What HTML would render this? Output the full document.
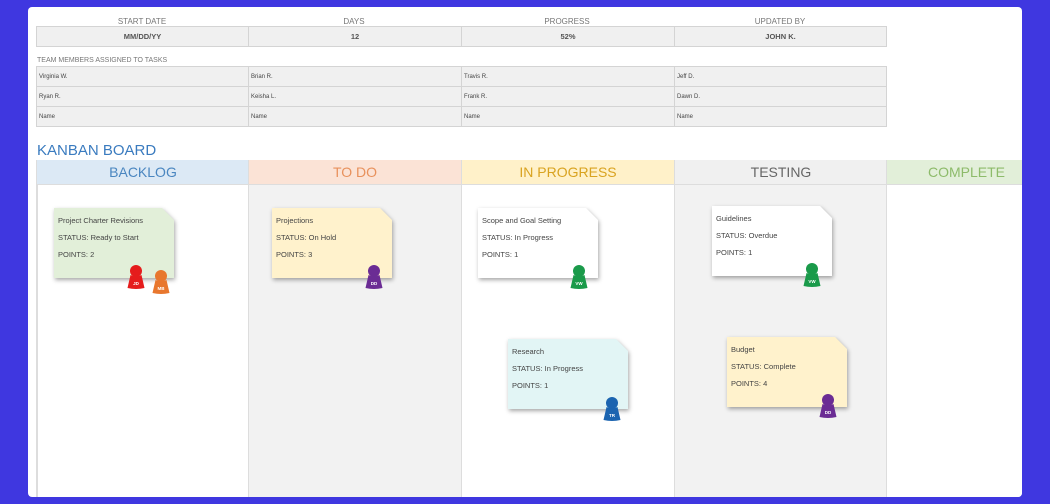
<!DOCTYPE html>
<html><head><meta charset="utf-8"><style>
*{margin:0;padding:0;box-sizing:border-box}
body{width:1050px;height:504px;background:#3f37e0;font-family:"Liberation Sans",sans-serif;position:relative;overflow:hidden}
.panel{position:absolute;left:28px;top:7px;width:994px;height:490px;background:#fff;border-radius:4px;overflow:hidden}
.a{position:absolute}
.lbl{position:absolute;font-size:8px;color:#777;text-align:center;width:212px}
.cell{position:absolute;background:#f0f0f0;border:1px solid #d4d4d4;font-size:7px;color:#444}
.hc{text-align:center;font-weight:bold;font-size:7.5px;line-height:19px;color:#555}
.tc{padding-left:2px;line-height:20px;font-size:6px;color:#444}
.col{position:absolute;top:153px;height:340px;border-left:1px solid #ddd}
.hdr{position:absolute;top:153px;height:25px;line-height:25px;text-align:center;font-size:14px;border-bottom:1px solid #ddd;border-left:1px solid #ddd}
.cw{position:absolute;filter:drop-shadow(1px 2px 2px rgba(0,0,0,.35))}
.card{width:120px;height:70px;clip-path:polygon(0 0,108px 0,120px 12px,120px 100%,0 100%);font-size:7.5px;color:#444;padding:4px 0 0 4px;line-height:17px}
</style></head><body>
<div class="panel">
<div class="lbl" style="left:8px;top:10px">START DATE</div>
<div class="lbl" style="left:220px;top:10px">DAYS</div>
<div class="lbl" style="left:433px;top:10px">PROGRESS</div>
<div class="lbl" style="left:646px;top:10px">UPDATED BY</div>
<div class="cell hc" style="left:8px;top:19px;width:213px;height:21px">MM/DD/YY</div>
<div class="cell hc" style="left:220px;top:19px;width:214px;height:21px">12</div>
<div class="cell hc" style="left:433px;top:19px;width:214px;height:21px">52%</div>
<div class="cell hc" style="left:646px;top:19px;width:213px;height:21px">JOHN K.</div>
<div class="a" style="left:9px;top:50px;font-size:7px;color:#777">TEAM MEMBERS ASSIGNED TO TASKS</div>
<div class="cell tc" style="left:8px;top:59px;width:213px;height:21px">Virginia W.</div>
<div class="cell tc" style="left:220px;top:59px;width:214px;height:21px">Brian R.</div>
<div class="cell tc" style="left:433px;top:59px;width:214px;height:21px">Travis R.</div>
<div class="cell tc" style="left:646px;top:59px;width:213px;height:21px">Jeff D.</div>
<div class="cell tc" style="left:8px;top:79px;width:213px;height:21px">Ryan R.</div>
<div class="cell tc" style="left:220px;top:79px;width:214px;height:21px">Keisha L.</div>
<div class="cell tc" style="left:433px;top:79px;width:214px;height:21px">Frank R.</div>
<div class="cell tc" style="left:646px;top:79px;width:213px;height:21px">Dawn D.</div>
<div class="cell tc" style="left:8px;top:99px;width:213px;height:21px">Name</div>
<div class="cell tc" style="left:220px;top:99px;width:214px;height:21px">Name</div>
<div class="cell tc" style="left:433px;top:99px;width:214px;height:21px">Name</div>
<div class="cell tc" style="left:646px;top:99px;width:213px;height:21px">Name</div>
<div class="a" style="left:9px;top:135px;font-size:15px;color:#3a7bbf">KANBAN BOARD</div>

<div class="col" style="left:8px;width:213px;background:#fff;border-left:2px solid #ddd"></div>
<div class="col" style="left:220px;width:213px;background:#f2f2f2"></div>
<div class="col" style="left:433px;width:213px;background:#fff"></div>
<div class="col" style="left:646px;width:213px;background:#f2f2f2"></div>
<div class="col" style="left:858px;width:140px;background:#fff"></div>
<div class="hdr" style="left:8px;width:213px;background:#dce9f5;color:#4a86c0">BACKLOG</div>
<div class="hdr" style="left:220px;width:213px;background:#fbe3d6;color:#e8915c">TO DO</div>
<div class="hdr" style="left:433px;width:213px;background:#fff1c9;color:#d9a320">IN PROGRESS</div>
<div class="hdr" style="left:646px;width:213px;background:#f0f0f0;color:#666">TESTING</div>
<div class="hdr" style="left:858px;width:160px;background:#e2efd9;color:#8dbb6a">COMPLETE</div>

<div class="cw" style="left:26px;top:201px"><div class="card" style="background:#e2efd9">Project Charter Revisions<br>STATUS: Ready to Start<br>POINTS: 2</div></div>
<div class="cw" style="left:244px;top:201px"><div class="card" style="background:#fff2cc">Projections<br>STATUS: On Hold<br>POINTS: 3</div></div>
<div class="cw" style="left:450px;top:201px"><div class="card" style="background:#fff">Scope and Goal Setting<br>STATUS: In Progress<br>POINTS: 1</div></div>
<div class="cw" style="left:684px;top:199px"><div class="card" style="background:#fff">Guidelines<br>STATUS: Overdue<br>POINTS: 1</div></div>
<div class="cw" style="left:480px;top:332px"><div class="card" style="background:#e2f5f5">Research<br>STATUS: In Progress<br>POINTS: 1</div></div>
<div class="cw" style="left:699px;top:330px"><div class="card" style="background:#fff2cc">Budget<br>STATUS: Complete<br>POINTS: 4</div></div>

<svg class="a" style="left:0;top:0" width="994" height="490">
<defs><g id="p"><circle cx="0" cy="-15" r="6"/><path d="M-5.5-11 Q0-8 5.5-11 L8.5 2 Q0 4 -8.5 2 Z"/></g></defs>
<g fill="#e51c1c"><use href="#p" x="108" y="279"/></g>
<g fill="#e8772e"><use href="#p" x="133" y="284"/></g>
<g fill="#6b2c94"><use href="#p" x="346" y="279"/></g>
<g fill="#1a9a4a"><use href="#p" x="551" y="279"/></g>
<g fill="#1a9a4a"><use href="#p" x="784" y="277"/></g>
<g fill="#1b64b0"><use href="#p" x="584" y="411"/></g>
<g fill="#6b2c94"><use href="#p" x="800" y="408"/></g>
<g fill="#fff" font-size="4.5" font-family="Liberation Sans" text-anchor="middle" font-weight="bold">
<text x="108" y="278">JD</text><text x="133" y="283">MB</text><text x="346" y="278">DD</text>
<text x="551" y="278">VW</text><text x="784" y="276">VW</text><text x="584" y="410">TR</text><text x="800" y="407">DD</text></g>
</svg>
</div>
</body></html>
